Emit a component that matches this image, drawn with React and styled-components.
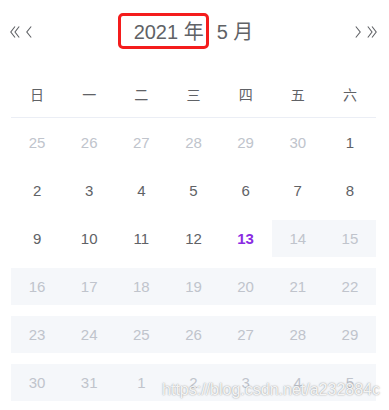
import React from "react";
import styled, { createGlobalStyle } from "styled-components";

const Global = createGlobalStyle`
  html, body { margin: 0; padding: 0; background: #fff; }
  body { font-family: "Liberation Sans", "Noto Sans CJK SC", sans-serif; }
`;

const Page = styled.div`
  position: relative;
  width: 389px;
  height: 410px;
  overflow: hidden;
  background: #fff;
`;

const Header = styled.div`
  height: 64px;
  display: grid;
  grid-template-columns: 1fr auto 1fr;
  align-items: center;
  padding: 0 12px 0 10px;
  color: #606266;
`;

const NavGroup = styled.div`
  display: flex;
  align-items: center;
  gap: 6px;
  justify-content: ${(p) => (p.$right ? "flex-end" : "flex-start")};
`;

const NavIcon = styled.svg`
  display: block;
  fill: none;
  stroke: #606266;
  stroke-width: 1.1;
`;

const Title = styled.div`
  display: flex;
  align-items: center;
  gap: 13px;
  font-size: 20px;
  color: #606266;
`;

const TitlePart = styled.span`
  position: relative;
  display: inline-block;
  line-height: 24px;
  ${(p) =>
    p.$marked &&
    `
    &::after {
      content: "";
      position: absolute;
      left: -16px;
      right: -5px;
      top: -7px;
      bottom: -5px;
      border: 3px solid #f41c1c;
      border-radius: 5px;
    }
  `}
`;

const Table = styled.div`
  margin: 0 13px 0 11px;
`;

const WeekHead = styled.div`
  display: grid;
  grid-template-columns: repeat(7, 1fr);
  margin-top: 12px;
  padding-bottom: 5px;
  border-bottom: 1px solid #ebeef5;
`;

const WeekCell = styled.div`
  height: 36px;
  line-height: 36px;
  text-align: center;
  font-size: 14px;
  color: #606266;
  font-family: "Noto Sans CJK SC", sans-serif;
`;

const Body = styled.div`
  display: flex;
  flex-direction: column;
  gap: 11px;
  padding-top: 6px;
`;

const Row = styled.div`
  display: grid;
  grid-template-columns: repeat(7, 1fr);
`;

const Day = styled.div`
  height: 37px;
  display: flex;
  align-items: center;
  justify-content: center;
  font-size: 15px;
  color: ${(p) => (p.$today ? "#8a2be2" : p.$muted ? "#c0c4cc" : "#606266")};
  font-weight: ${(p) => (p.$today ? 700 : 400)};
  background: ${(p) => (p.$disabled ? "#f5f7fa" : "transparent")};
`;

const Watermark = styled.div`
  position: absolute;
  right: 9px;
  bottom: 11px;
  font-size: 16px;
  font-family: "Liberation Sans", sans-serif;
  color: rgba(255, 255, 255, 0.9);
  text-shadow: 0 0 1.5px rgba(90, 90, 90, 0.75);
  pointer-events: none;
`;

const DoubleLeft = () => (
  <NavIcon width="10" height="12" viewBox="0 0 10 12">
    <polyline points="5,0.5 0.8,6 5,11.5" />
    <polyline points="9.2,0.5 5,6 9.2,11.5" />
  </NavIcon>
);
const SingleLeft = () => (
  <NavIcon width="6" height="12" viewBox="0 0 6 12">
    <polyline points="5.2,0.5 0.8,6 5.2,11.5" />
  </NavIcon>
);
const SingleRight = () => (
  <NavIcon width="6" height="12" viewBox="0 0 6 12">
    <polyline points="0.8,0.5 5.2,6 0.8,11.5" />
  </NavIcon>
);
const DoubleRight = () => (
  <NavIcon width="10" height="12" viewBox="0 0 10 12">
    <polyline points="0.8,0.5 5,6 0.8,11.5" />
    <polyline points="5,0.5 9.2,6 5,11.5" />
  </NavIcon>
);

const weeks = ["日", "一", "二", "三", "四", "五", "六"];

const rows = [
  [25, 26, 27, 28, 29, 30].map((d) => ({ d, muted: true })).concat([{ d: 1 }]),
  [2, 3, 4, 5, 6, 7, 8].map((d) => ({ d })),
  [
    { d: 9 },
    { d: 10 },
    { d: 11 },
    { d: 12 },
    { d: 13, today: true },
    { d: 14, muted: true, disabled: true },
    { d: 15, muted: true, disabled: true },
  ],
  [16, 17, 18, 19, 20, 21, 22].map((d) => ({ d, muted: true, disabled: true })),
  [23, 24, 25, 26, 27, 28, 29].map((d) => ({ d, muted: true, disabled: true })),
  [30, 31, 1, 2, 3, 4, 5].map((d) => ({ d, muted: true, disabled: true })),
];

export default function App() {
  return (
    <Page>
      <Global />
      <Header>
        <NavGroup>
          <DoubleLeft />
          <SingleLeft />
        </NavGroup>
        <Title>
          <TitlePart $marked>2021 年</TitlePart>
          <TitlePart>5 月</TitlePart>
        </Title>
        <NavGroup $right>
          <SingleRight />
          <DoubleRight />
        </NavGroup>
      </Header>
      <Table>
        <WeekHead>
          {weeks.map((w) => (
            <WeekCell key={w}>{w}</WeekCell>
          ))}
        </WeekHead>
        <Body>
          {rows.map((r, i) => (
            <Row key={i}>
              {r.map((c, j) => (
                <Day key={j} $muted={c.muted} $disabled={c.disabled} $today={c.today}>
                  {c.d}
                </Day>
              ))}
            </Row>
          ))}
        </Body>
      </Table>
      <Watermark>https://blog.csdn.net/a232884c</Watermark>
    </Page>
  );
}
